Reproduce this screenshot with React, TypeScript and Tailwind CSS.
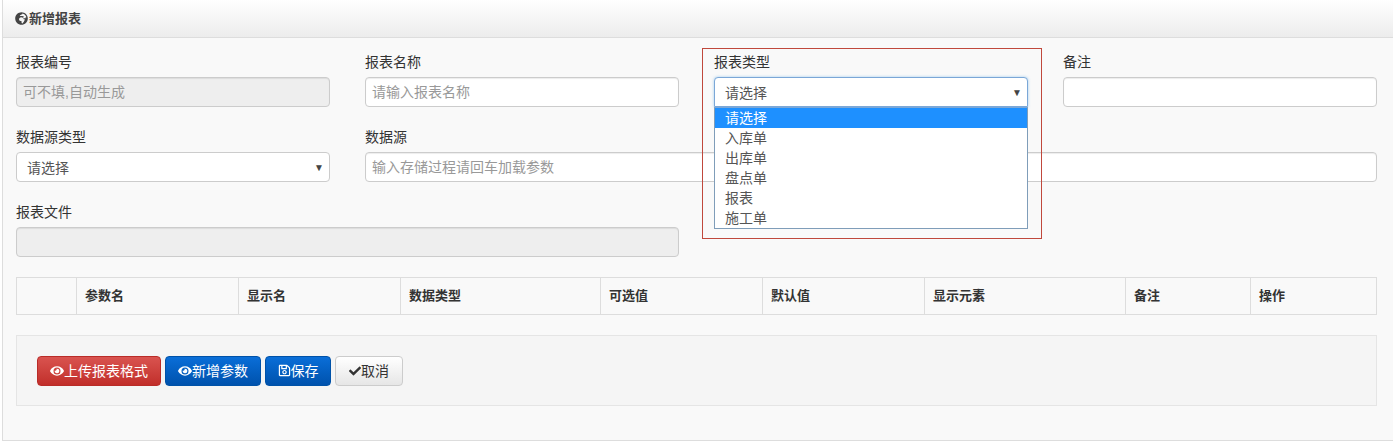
import { FaCheck, FaEye, FaGlobeAfrica, FaRegSave } from "react-icons/fa";

const inputBase = "h-[30px] w-full rounded-[4px] border border-[#cccccc] px-[6px] text-sm leading-[28px] shadow-[inset_0_1px_1px_rgba(0,0,0,0.075)]";
const columns = [
  { label: "", width: "w-[60px]" },
  { label: "参数名", width: "w-[162px]" },
  { label: "显示名", width: "w-[162px]" },
  { label: "数据类型", width: "w-[200px]" },
  { label: "可选值", width: "w-[162px]" },
  { label: "默认值", width: "w-[162px]" },
  { label: "显示元素", width: "w-[201px]" },
  { label: "备注", width: "w-[125px]" },
  { label: "操作", width: "flex-1" },
];
const options = ["请选择", "入库单", "出库单", "盘点单", "报表", "施工单"];

function Field({ label, className, children }: { label: string; className?: string; children: React.ReactNode }) {
  return (
    <div className={className}>
      <label className="mb-[5px] block h-5 text-sm leading-5 text-[#333333]">{label}</label>
      {children}
    </div>
  );
}

function Select({ focused }: { focused?: boolean }) {
  return (
    <div className={`flex h-[30px] justify-between rounded-[4px] border bg-white pl-[10px] pr-[5px] pt-px text-sm leading-[28px] text-[#555555] ${focused ? "rounded-b-none border-[#7ba7d7] shadow-[0_0_3px_rgba(102,175,233,0.6)]" : "border-[#cccccc]"}`}>
      <span>请选择</span>
      <span className="text-[10px] text-[#444444]">▼</span>
    </div>
  );
}

export default function App() {
  return (
    <div className="h-[442px] w-[1393px] overflow-hidden bg-white pl-[2px] font-['Liberation_Sans','Noto_Sans_CJK_SC',sans-serif]">
      <div className="h-[441px] border-b border-l border-[#dddddd] bg-[#f9f9f9]">
        {/* Header */}
        <div className="flex h-[38px] items-center gap-px border-b border-[#dddddd] bg-gradient-to-b from-white to-[#ececec] pl-[12px] text-[13px] font-bold text-[#444444]">
          <FaGlobeAfrica className="text-[13px] text-[#444444]" />
          新增报表
        </div>

        <div className="px-[13px] pt-[14px]">
          {/* Form */}
          <div className="grid grid-cols-[314px_314px_314px_314px] gap-x-[35px] gap-y-[20px]">
            <Field label="报表编号">
              <div className={`${inputBase} bg-[#eeeeee] text-[#999999]`}>可不填,自动生成</div>
            </Field>
            <Field label="报表名称">
              <div className={`${inputBase} bg-white text-[#999999]`}>请输入报表名称</div>
            </Field>
            <Field label="报表类型" className="relative">
              <Select focused />
              {/* Open dropdown and the red note frame */}
              <div className="absolute left-0 right-0 top-[55px] z-10 border border-t-[#7ba7d7] border-x-[#7f9db9] border-b-[#7f9db9] bg-white text-sm text-[#555555]">
                {options.map((option, i) => (
                  <div key={option} className={`h-5 pl-[10px] leading-5 ${i === 0 ? "bg-[#1e90ff] text-white" : ""}`}>
                    {option}
                  </div>
                ))}
              </div>
              <div className="pointer-events-none absolute left-[-12px] top-[-4px] z-20 h-[191px] w-[340px] border border-[#c0483c]" />
            </Field>
            <Field label="备注">
              <div className={`${inputBase} bg-white`} />
            </Field>

            <Field label="数据源类型">
              <Select />
            </Field>
            <Field label="数据源" className="col-span-3">
              <div className={`${inputBase} bg-white text-[#999999]`}>输入存储过程请回车加载参数</div>
            </Field>

            <Field label="报表文件" className="col-span-2">
              <div className={`${inputBase} bg-[#eeeeee]`} />
            </Field>
          </div>

          {/* Parameter table */}
          <div className="mt-5 flex h-[38px] w-[1361px] border border-[#dddddd]">
            {columns.map((col, i) => (
              <div key={i} className={`${col.width} border-r border-[#dddddd] pl-2 text-[13px] font-bold leading-[36px] text-[#333333] last:border-r-0`}>
                {col.label}
              </div>
            ))}
          </div>

          {/* Actions */}
          <div className="mt-5 flex h-[71px] w-[1361px] items-center gap-1 border border-[#e5e5e5] bg-[#f5f5f5] pl-5">
            <button className="flex h-[30px] w-[124px] items-center justify-center rounded-[4px] border border-[#b92c28] bg-gradient-to-b from-[#d9534f] to-[#c12e2a] text-sm text-white">
              <FaEye className="text-[14px]" />
              上传报表格式
            </button>
            <button className="flex h-[30px] w-[96px] items-center justify-center rounded-[4px] border border-[#0052a8] bg-gradient-to-b from-[#0a6ed8] to-[#0052ad] text-sm text-white">
              <FaEye className="text-[14px]" />
              新增参数
            </button>
            <button className="flex h-[30px] w-[66px] items-center justify-center rounded-[4px] border border-[#0052a8] bg-gradient-to-b from-[#0a6ed8] to-[#0052ad] text-sm text-white">
              <FaRegSave className="text-[13px]" />
              保存
            </button>
            <button className="flex h-[30px] w-[68px] items-center justify-center rounded-[4px] border border-[#cccccc] bg-gradient-to-b from-white to-[#e6e6e6] text-sm text-[#333333]">
              <FaCheck className="text-[12px]" />
              取消
            </button>
          </div>
        </div>
      </div>
    </div>
  );
}
